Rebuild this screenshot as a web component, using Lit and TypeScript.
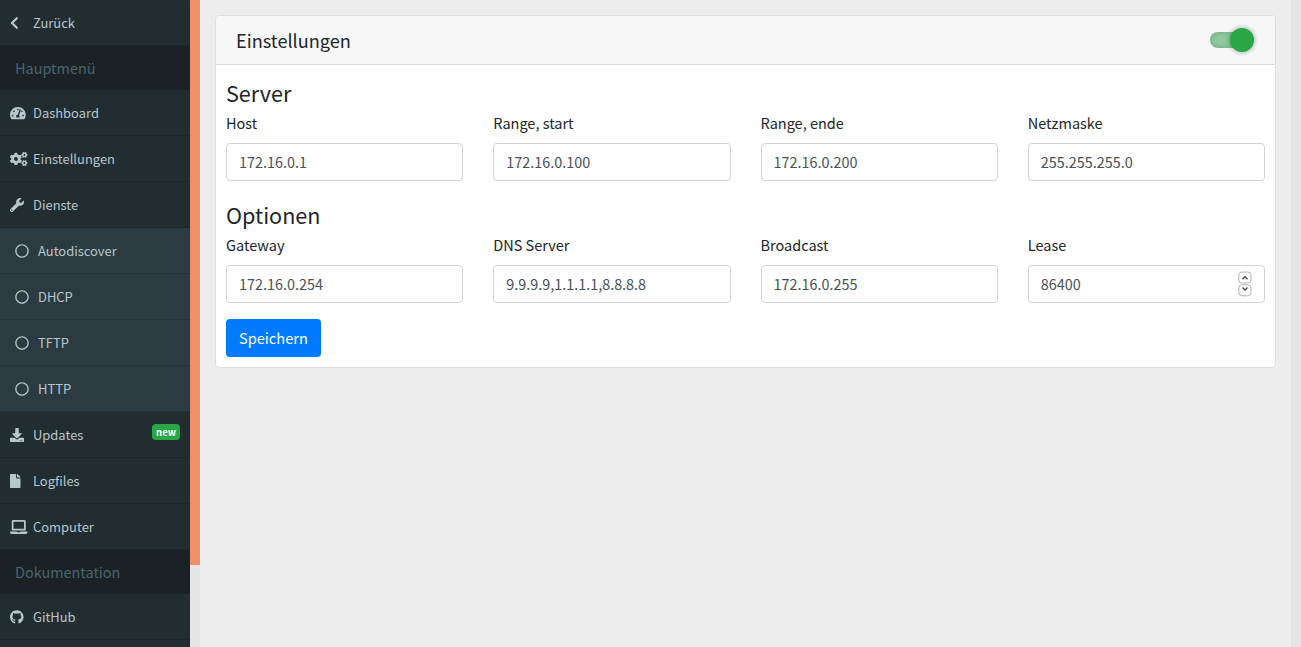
import { LitElement, html, css, svg, nothing } from "lit";
import { customElement } from "lit/decorators.js";

const SMALL_GEAR =
  "M512.1 191l-8.2 14.3c-3 5.3-9.4 7.5-15.1 5.4-11.8-4.4-22.6-10.7-32.1-18.6-4.6-3.8-5.8-10.5-2.8-15.7l8.2-14.3c-6.9-8-12.3-17.3-15.9-27.4h-16.5c-6 0-11.2-4.3-12.2-10.3-2-12-2.1-24.6 0-37.1 1-6 6.2-10.4 12.2-10.4h16.5c3.6-10.1 9-19.4 15.9-27.4l-8.2-14.3c-3-5.2-1.9-11.9 2.8-15.7 9.5-7.9 20.4-14.2 32.1-18.6 5.7-2.1 12.1.1 15.1 5.4l8.2 14.3c10.5-1.9 21.2-1.9 31.7 0L552 6.3c3-5.3 9.4-7.5 15.1-5.4 11.8 4.4 22.6 10.7 32.1 18.6 4.6 3.8 5.8 10.5 2.8 15.7l-8.2 14.3c6.9 8 12.3 17.3 15.9 27.4h16.5c6 0 11.2 4.3 12.2 10.3 2 12 2.1 24.6 0 37.1-1 6-6.2 10.4-12.2 10.4h-16.5c-3.6 10.1-9 19.4-15.9 27.4l8.2 14.3c3 5.2 1.9 11.9-2.8 15.7-9.5 7.9-20.4 14.2-32.1 18.6-5.7 2.1-12.1-.1-15.1-5.4l-8.2-14.3c-10.4 1.9-21.2 1.9-31.7 0zm-10.5-58.8c38.5 29.6 82.4-14.3 52.8-52.8-38.5-29.7-82.4 14.3-52.8 52.8z";

const ICONS: Record<string, { w: number; body: unknown }> = {
  back: {
    w: 320,
    body: svg`<path d="M34.52 239.03L228.87 44.69c9.37-9.37 24.57-9.37 33.94 0l22.67 22.67c9.36 9.36 9.37 24.52.04 33.9L131.49 256l154.02 154.75c9.34 9.38 9.32 24.54-.04 33.9l-22.67 22.67c-9.37 9.37-24.57 9.37-33.94 0L34.52 272.97c-9.37-9.37-9.37-24.57 0-33.94z"/>`,
  },
  gauge: {
    w: 576,
    body: svg`<path d="M288 32C128.94 32 0 160.94 0 320c0 52.8 14.25 102.26 39.06 144.8 5.61 9.62 16.3 15.2 27.44 15.2h443c11.14 0 21.83-5.58 27.44-15.2C561.75 422.26 576 372.8 576 320c0-159.06-128.94-288-288-288zm0 64c14.71 0 26.58 10.13 30.32 23.65-1.11 2.26-2.64 4.23-3.45 6.67l-9.22 27.67c-5.13 3.49-10.97 6.01-17.64 6.01-17.67 0-32-14.33-32-32S270.33 96 288 96zM96 384c-17.67 0-32-14.33-32-32s14.33-32 32-32 32 14.33 32 32-14.33 32-32 32zm48-160c-17.67 0-32-14.33-32-32s14.33-32 32-32 32 14.33 32 32-14.33 32-32 32zm246.77-72.41l-61.33 184C343.13 347.33 352 364.54 352 384c0 11.72-3.38 22.55-8.88 32H232.88c-5.5-9.45-8.88-20.28-8.88-32 0-33.94 26.5-61.43 59.9-63.59l61.34-184.01c4.17-12.56 17.73-19.45 30.36-15.17 12.57 4.19 19.35 17.79 15.17 30.36zm14.66 57.2l15.52-46.55c3.47-1.29 7.13-2.23 11.05-2.23 17.67 0 32 14.33 32 32s-14.33 32-32 32c-11.38-.01-20.89-6.28-26.57-15.22zM480 384c-17.67 0-32-14.33-32-32s14.33-32 32-32 32 14.33 32 32-14.33 32-32 32z"/>`,
  },
  cogs: {
    w: 640,
    body: svg`<path d=${SMALL_GEAR}/><path transform="translate(0 298.9)" d=${SMALL_GEAR}/><path d="M386.3 286.1l33.7 16.8c10.1 5.8 14.5 18.1 10.5 29.1-8.9 24.2-26.4 46.4-42.6 65.8-7.4 8.9-20.2 11.1-30.3 5.3l-29.1-16.8c-16 13.7-34.6 24.6-54.9 31.7v33.6c0 11.6-8.3 21.6-19.7 23.6-24.6 4.2-50.4 4.4-75.9 0-11.5-2-20-11.9-20-23.6V418c-20.3-7.2-38.9-18-54.9-31.7L74 403c-10 5.8-22.9 3.6-30.3-5.3-16.2-19.4-33.3-41.6-42.2-65.7-4-10.9.4-23.2 10.5-29.1l33.3-16.8c-3.9-20.9-3.9-42.4 0-63.4L12 205.8c-10.1-5.8-14.6-18.1-10.5-29 8.9-24.2 26-46.4 42.2-65.8 7.4-8.9 20.2-11.1 30.3-5.3l29.1 16.8c16-13.7 34.6-24.6 54.9-31.7V57.1c0-11.5 8.2-21.5 19.6-23.5 24.6-4.2 50.5-4.4 76-.1 11.5 2 20 11.9 20 23.6v33.6c20.3 7.2 38.9 18 54.9 31.7l29.1-16.8c10-5.8 22.9-3.6 30.3 5.3 16.2 19.4 33.2 41.6 42.1 65.8 4 10.9.1 23.2-10 29.1l-33.7 16.8c3.9 21 3.9 42.5 0 63.5zm-117.6 21.1c59.2-77-28.7-164.9-105.7-105.7-59.2 77 28.7 164.9 105.7 105.7z"/>`,
  },
  wrench: {
    w: 512,
    body: svg`<path d="M507.73 109.1c-2.24-9.03-13.54-12.09-20.12-5.51l-74.36 74.36-67.88-11.31-11.31-67.88 74.36-74.36c6.62-6.62 3.43-17.9-5.66-20.16-47.38-11.74-99.55.91-136.58 37.93-39.64 39.64-50.55 97.1-34.05 147.2L18.74 402.76c-24.99 24.99-24.99 65.51 0 90.5 24.99 24.99 65.51 24.99 90.5 0l213.21-213.21c50.12 16.71 107.47 5.68 147.37-34.22 37.07-37.07 49.7-89.32 37.91-136.73zM64 472c-13.25 0-24-10.75-24-24 0-13.26 10.75-24 24-24s24 10.74 24 24c0 13.25-10.75 24-24 24z"/>`,
  },
  circle: {
    w: 512,
    body: svg`<path d="M256 8C119 8 8 119 8 256s111 248 248 248 248-111 248-248S393 8 256 8zm0 448c-110.5 0-200-89.5-200-200S145.5 56 256 56s200 89.5 200 200-89.5 200-200 200z"/>`,
  },
  download: {
    w: 512,
    body: svg`<path d="M216 0h80c13.3 0 24 10.7 24 24v168h87.7c17.8 0 26.7 21.5 14.1 34.1L269.7 378.3c-7.5 7.5-19.8 7.5-27.3 0L90.1 226.1c-12.6-12.6-3.7-34.1 14.1-34.1H192V24c0-13.3 10.7-24 24-24zm296 376v112c0 13.3-10.7 24-24 24H24c-13.3 0-24-10.7-24-24V376c0-13.3 10.7-24 24-24h146.7l49 49c20.1 20.1 52.5 20.1 72.6 0l49-49H488c13.3 0 24 10.7 24 24zm-124 88c0-11-9-20-20-20s-20 9-20 20 9 20 20 20 20-9 20-20zm64 0c0-11-9-20-20-20s-20 9-20 20 9 20 20 20 20-9 20-20z"/>`,
  },
  file: {
    w: 384,
    body: svg`<path d="M224 136V0H24C10.7 0 0 10.7 0 24v464c0 13.3 10.7 24 24 24h336c13.3 0 24-10.7 24-24V160H248c-13.2 0-24-10.8-24-24zm160-14.1v6.1H256V0h6.1c6.4 0 12.5 2.5 17 7l97.9 98c4.5 4.5 7 10.6 7 16.9z"/>`,
  },
  laptop: {
    w: 640,
    body: svg`<path d="M624 416H381.54c-.74 19.81-14.71 32-32.74 32H288c-18.69 0-33.02-17.47-32.77-32H16c-8.8 0-16 7.2-16 16v16c0 35.2 28.8 64 64 64h512c35.2 0 64-28.8 64-64v-16c0-8.8-7.2-16-16-16zM576 48c0-26.4-21.6-48-48-48H112C85.6 0 64 21.6 64 48v336h512V48zm-64 272H128V64h384v256z"/>`,
  },
  github: {
    w: 496,
    body: svg`<path d="M244.8 8C106.1 8 0 113.3 0 252c0 110.9 69.8 205.8 169.5 239.2 12.8 2.3 17.3-5.6 17.3-12.1 0-6.2-.3-40.4-.3-61.4 0 0-70 15-84.7-29.8 0 0-11.4-29.1-27.8-36.6 0 0-22.9-15.7 1.6-15.4 0 0 24.9 2 38.6 25.8 21.9 38.6 58.6 27.5 72.9 20.9 2.3-16 8.8-27.1 16-33.7-55.9-6.2-112.3-14.3-112.3-110.5 0-27.5 7.6-41.3 23.6-58.9-2.6-6.5-11.1-33.3 2.6-67.9 20.9-6.5 69 27 69 27 20-5.6 41.5-8.5 62.8-8.5s42.8 2.9 62.8 8.5c0 0 48.1-33.6 69-27 13.7 34.7 5.2 61.4 2.6 67.9 16 17.7 25.8 31.5 25.8 58.9 0 96.5-58.9 104.2-114.8 110.5 9.2 7.9 17 22.9 17 46.4 0 33.7-.3 75.4-.3 83.6 0 6.5 4.6 14.4 17.3 12.1C428.2 457.8 496 362.9 496 252 496 113.3 383.5 8 244.8 8z"/>`,
  },
};

interface Entry {
  label: string;
  icon?: string;
  sub?: boolean;
  badge?: string;
}

const MENU: Entry[] = [
  { label: "Zurück", icon: "back" },
  { label: "Hauptmenü" },
  { label: "Dashboard", icon: "gauge" },
  { label: "Einstellungen", icon: "cogs" },
  { label: "Dienste", icon: "wrench" },
  { label: "Autodiscover", icon: "circle", sub: true },
  { label: "DHCP", icon: "circle", sub: true },
  { label: "TFTP", icon: "circle", sub: true },
  { label: "HTTP", icon: "circle", sub: true },
  { label: "Updates", icon: "download", badge: "new" },
  { label: "Logfiles", icon: "file" },
  { label: "Computer", icon: "laptop" },
  { label: "Dokumentation" },
  { label: "GitHub", icon: "github" },
];

@customElement("side-menu")
class SideMenu extends LitElement {
  static styles = css`
    :host {
      display: flex;
      height: 100%;
      overflow: hidden;
    }
    .list {
      width: 190px;
      background: #222d32;
      font-size: 12.95px;
      line-height: 21px;
      color: #b8c7ce;
    }
    .row {
      box-sizing: border-box;
      height: 46px;
      padding: 0 10px;
      display: flex;
      align-items: center;
      border-bottom: 1px solid #1c272b;
    }
    .row.sub {
      background: #2c3b41;
      padding-left: 15px;
      border-bottom-color: #24333a;
    }
    .icon {
      width: 23px;
      height: 14px;
      flex: none;
      display: flex;
      margin-top: 1px;
    }
    .icon svg {
      height: 14px;
      fill: currentColor;
      overflow: visible;
      flex: none;
    }
    .label {
      flex: 1;
      padding-bottom: 1px;
    }
    .head {
      height: 44px;
      line-height: 44px;
      padding-left: 15px;
      font-size: 14.45px;
      background: #1a2226;
      color: #4b646f;
    }
    .badge {
      height: 16px;
      line-height: 16px;
      padding: 0 4px;
      border-radius: 4px;
      background: #28a745;
      color: #fff;
      font-size: 9.6px;
      font-weight: 700;
      margin-bottom: 5px;
    }
    .scroll {
      width: 10px;
      background: #e5e5e5;
    }
    .thumb {
      height: 565px;
      background: #f08f68;
      border-radius: 1px;
    }
  `;

  row(e: Entry) {
    if (!e.icon) return html`<div class="head">${e.label}</div>`;
    const icon = ICONS[e.icon];
    return html`<div class="row ${e.sub ? "sub" : ""}">
      <span class="icon"
        ><svg viewBox="0 0 ${icon.w} 512" width=${(icon.w / 512) * 14} height="14">${icon.body}</svg></span
      >
      <span class="label">${e.label}</span>
      ${e.badge ? html`<span class="badge">${e.badge}</span>` : nothing}
    </div>`;
  }

  render() {
    return html`<nav class="list">${MENU.map((e) => this.row(e))}</nav>
      <div class="scroll"><div class="thumb"></div></div>`;
  }
}

interface Field {
  label: string;
  value: string;
  number?: boolean;
}

const GROUPS: { title: string; fields: Field[] }[] = [
  {
    title: "Server",
    fields: [
      { label: "Host", value: "172.16.0.1" },
      { label: "Range, start", value: "172.16.0.100" },
      { label: "Range, ende", value: "172.16.0.200" },
      { label: "Netzmaske", value: "255.255.255.0" },
    ],
  },
  {
    title: "Optionen",
    fields: [
      { label: "Gateway", value: "172.16.0.254" },
      { label: "DNS Server", value: "9.9.9.9,1.1.1.1,8.8.8.8" },
      { label: "Broadcast", value: "172.16.0.255" },
      { label: "Lease", value: "86400", number: true },
    ],
  },
];

@customElement("settings-card")
class SettingsCard extends LitElement {
  static styles = css`
    :host {
      display: block;
      box-sizing: border-box;
      background: #fff;
      border: 1px solid #dfdfdf;
      border-radius: 4px;
      color: #212529;
    }
    .header {
      display: flex;
      align-items: center;
      justify-content: space-between;
      height: 48px;
      padding: 0 21px 0 20px;
      background: #f7f7f7;
      border-bottom: 1px solid #dadada;
      border-radius: 3px 3px 0 0;
      font-size: 18.15px;
    }
    .title {
      line-height: 27px;
    }
    .switch {
      display: flex;
      align-items: center;
      width: 44px;
      height: 24px;
    }
    .track {
      width: 40px;
      height: 16px;
      margin-right: -20px;
      border-radius: 8px;
      background: #8fca9d;
      box-shadow: inset 0 0 6px rgba(0, 0, 0, 0.2);
      flex: none;
    }
    .knob {
      width: 24px;
      height: 24px;
      border-radius: 50%;
      background: #28a745;
      box-shadow: 0 0 5px rgba(0, 0, 0, 0.4);
      flex: none;
    }
    .body {
      padding: 14px 10px 10px;
    }
    .group {
      font-size: 21.6px;
      line-height: 28px;
      margin-bottom: 4px;
    }
    .grid {
      display: grid;
      grid-template-columns: repeat(4, minmax(0, 1fr));
      gap: 30px;
      margin-bottom: 20px;
    }
    .grid.last {
      margin-bottom: 16px;
    }
    .label {
      display: block;
      line-height: 24px;
      font-size: 14.5px;
      margin-bottom: 8px;
    }
    .control {
      position: relative;
    }
    .input {
      display: block;
      box-sizing: border-box;
      width: 100%;
      height: 38px;
      padding: 5px 12px 7px;
      font: inherit;
      font-size: 14.4px;
      line-height: 24px;
      color: #495057;
      background: #fff;
      border: 1px solid #ced4da;
      border-radius: 4px;
      outline: none;
    }
    .spin {
      position: absolute;
      right: 13px;
      top: 6px;
      width: 14px;
      height: 26px;
    }
    .save {
      display: block;
      height: 38px;
      padding: 0 13px;
      border: 0;
      border-radius: 4px;
      background: #007bff;
      color: #fff;
      font: inherit;
      font-size: 14.6px;
      line-height: 38px;
    }
  `;

  field(f: Field) {
    return html`<div>
      <label class="label">${f.label}</label>
      <div class="control">
        <input class="input" type="text" .value=${f.value} />
        ${f.number
          ? html`<svg class="spin" viewBox="0 0 14 26" fill="#fcfcfc" stroke="#b4b4b4">
              <rect x="0.8" y="1" width="12.2" height="11" rx="3" />
              <rect x="0.8" y="13.8" width="12.2" height="11" rx="3" />
              <path d="M4.5 8.2L7 5.7l2.5 2.5M4.5 16.5l2.5 2.5L9.5 16.5" fill="none" stroke="#444" stroke-width="1.3" />
            </svg>`
          : nothing}
      </div>
    </div>`;
  }

  render() {
    return html`<div class="header">
        <div class="title">Einstellungen</div>
        <div class="switch"><span class="track"></span><span class="knob"></span></div>
      </div>
      <div class="body">
        ${GROUPS.map(
          (g, i) => html`<div class="group">${g.title}</div>
            <div class="grid ${i === GROUPS.length - 1 ? "last" : ""}">${g.fields.map((f) => this.field(f))}</div>`
        )}
        <button class="save">Speichern</button>
      </div>`;
  }
}

@customElement("app-root")
class AppRoot extends LitElement {
  static styles = css`
    :host {
      display: flex;
      height: 100vh;
      overflow: hidden;
      background: #ededed;
      font-family: "Noto Sans CJK SC", "Noto Sans", sans-serif;
    }
    .main {
      flex: 1;
      padding: 15px;
    }
    .scroll {
      width: 10px;
      background: #e5e5e5;
    }
  `;

  render() {
    return html`<side-menu></side-menu>
      <main class="main"><settings-card></settings-card></main>
      <div class="scroll"></div>`;
  }
}
